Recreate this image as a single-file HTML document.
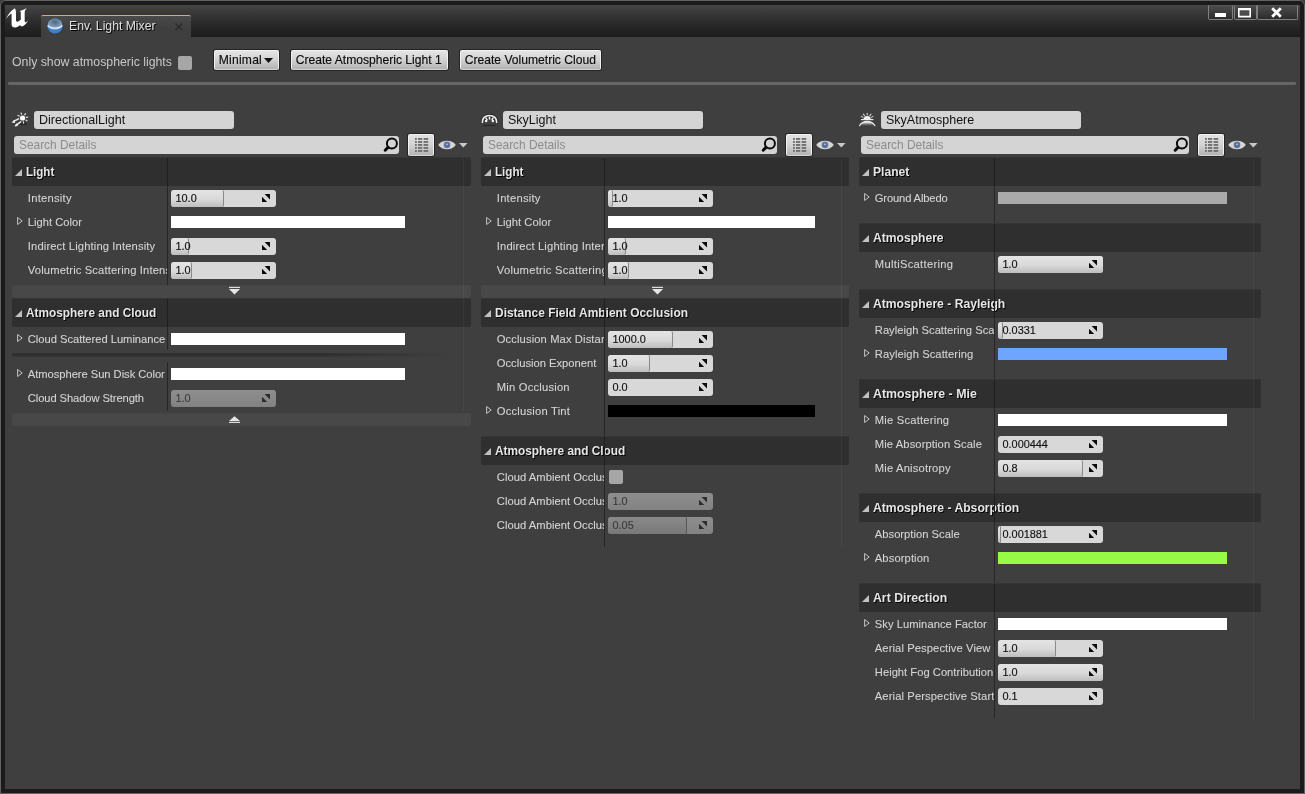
<!DOCTYPE html>
<html lang="en"><head><meta charset="utf-8"><title>Env. Light Mixer</title>
<style>
html,body{margin:0;padding:0;}
body{width:1305px;height:794px;overflow:hidden;background:#3f3f3f;position:relative;font-family:"Liberation Sans",sans-serif;font-size:12px;color:#c8c8c8;}
div,span{position:absolute;box-sizing:border-box;white-space:nowrap;}
svg{position:absolute;overflow:visible;}
.t{line-height:16px;height:16px;}
.lbl{color:#d4d4d4;-webkit-text-stroke:0.1px #d4d4d4;font-size:11.2px;overflow:hidden;}
.hdr{background:linear-gradient(#383838 0,#2f2f2f 1.5px);height:29px;border-radius:2px;}
.hdr b{position:absolute;left:14px;top:6.5px;line-height:16px;font-size:12.4px;transform-origin:0 0;color:#e6e6e6;text-shadow:1px 1px 0 #000;font-weight:bold;}
.spin{height:17px;width:105px;border-radius:3px;background:#d8d8d8;overflow:hidden;}
.spin i{position:absolute;left:0;top:0;bottom:0;border-radius:3px 2px 2px 3px;background:linear-gradient(#e4e4e4,#d9d9d9 55%,#bdbdbd);border-right:1px solid #8a8a8a;}
.spin span{left:4.5px;top:0;line-height:17px;font-size:10.9px;color:#111;-webkit-text-stroke:0.15px #111;}
.spin.dis{background:linear-gradient(#8e8e8e,#828282);}
.spin.dis span{color:#3c3c3c;-webkit-text-stroke:0.15px #3c3c3c;}
.spin.dis i{background:linear-gradient(#8a8a8a,#808080 55%,#787878);border-right:1px solid #565656;}
.cb{height:12px;}
.btn{height:20px;top:50px;border-radius:2px;background:linear-gradient(#e4e4e4,#d2d2d2 50%,#b2b2b2);border:1px solid #f2f2f2;border-bottom-color:#d4d4d4;box-shadow:0 0 0 1px rgba(28,28,28,.75);color:#0c0c0c;font-size:12.1px;line-height:18px;text-align:left;padding-left:3.8px;-webkit-text-stroke:0.15px #0c0c0c;}
.inp{background:#d4d4d4;border-radius:3px;color:#111;}
.split{width:1px;background:#262626;}
.exp{height:13px;background:linear-gradient(#434343 0,#484848 1.5px);border-radius:0 0 3px 3px;}
</style></head>
<body>
<div id="w" style="left:0;top:0;width:1305px;height:794px;will-change:transform;">
<div style="left:0;top:0;width:1305px;height:794px;border:1px solid #626262;border-radius:6px 6px 0 0;"></div>
<div style="left:1px;top:1px;width:1303px;height:792px;border:4px solid #1b1b1b;border-radius:5px 5px 0 0;"></div>
<div style="left:5px;top:5px;width:1295px;height:32px;background:linear-gradient(#464646,#3a3a3a 22%,#2a2a2a 58%,#1c1c1c);"></div>
<svg style="left:6px;top:8px" width="23" height="20" viewBox="0 0 23 20"><path fill="#fff" d="M0 10.9 C2 6.4 5 2.2 8.8 0.2 C9.6 1.4 10 2.4 10 3.6 L10 12 C10 13.5 11 14 12.2 13.4 L14.8 11.8 L14.8 4.6 C14.8 3.6 14.4 3.2 13.6 3 C16 2.4 18.6 1.6 20.8 0 C19.4 1.6 18.7 2.8 18.7 4.2 L18.7 13.2 C18.7 14.4 19.4 14.6 20.4 14 L22.2 12.6 C20.8 15.6 18.2 17.8 16 18.6 C14.8 18.2 14.4 17.8 14.2 17 C12.6 18.5 10.8 19.3 9.2 19.4 C7 19.5 5.6 18.4 5.6 16.4 L5.6 6.8 C5.6 5.8 5.2 5.6 4.4 6.2 C3 7.4 1.4 9 0 10.9 Z"/></svg>
<div style="left:41px;top:15px;width:150px;height:22px;background:linear-gradient(#4a4a4a,#3f3f3f 60%);border-top:1px solid #d8b832;border-radius:2px 2px 0 0;"></div>
<svg style="left:47px;top:18px" width="16" height="16" viewBox="0 0 16 16"><defs><radialGradient id="sg" cx="50%" cy="30%" r="60%"><stop offset="0" stop-color="#4a6782"/><stop offset="1" stop-color="#93abc2"/></radialGradient></defs><circle cx="8" cy="8" r="7.6" fill="#3a7fd0"/><ellipse cx="8" cy="6.2" rx="7" ry="5.6" fill="url(#sg)"/><path d="M0.8 7.4 C2.5 11 13.5 11 15.2 7.4" fill="none" stroke="#e6eef6" stroke-width="1.3"/></svg>
<span class="t" style="left:69px;top:18px;font-size:12.2px;color:#e0e0e0;text-shadow:1px 1px 0 #000;">Env. Light Mixer</span>
<svg style="left:175px;top:22.5px" width="8" height="8" viewBox="0 0 8 8"><path d="M0.5 0.5 L7 7 M7 0.5 L0.5 7" stroke="#2b2b2b" stroke-width="1.3"/></svg>
<div style="left:1208px;top:5px;width:25px;height:15px;border:1px solid #808080;border-top-color:#555;background:linear-gradient(#4c4c4c,#2b2b2b);border-radius:0 0 2px 2px;"><div style="left:5.8px;top:6.6px;width:11px;height:4px;background:#fff;"></div></div>
<div style="left:1234px;top:5px;width:23px;height:15px;border:1px solid #808080;border-top-color:#555;background:linear-gradient(#4c4c4c,#2b2b2b);border-radius:0 0 2px 2px;"><svg style="left:3.4px;top:2.4px" width="13" height="10" viewBox="0 0 13 10"><rect x="0" y="0" width="13" height="9.4" fill="#4c4c4c"/><path fill-rule="evenodd" d="M0 0 H13 V9.4 H0 Z M1.6 2.3 H11.4 V7.8 H1.6 Z" fill="#fff"/></svg></div>
<div style="left:1257px;top:5px;width:41px;height:15px;border:1px solid #808080;border-top-color:#555;background:linear-gradient(#4c4c4c,#2b2b2b);border-radius:0 0 2px 2px;"><svg style="left:12.8px;top:0.9px" width="11" height="11" viewBox="0 0 11 11"><path d="M1.2 1.2 L9.8 9.8 M9.8 1.2 L1.2 9.8" stroke="#fff" stroke-width="2.8"/></svg></div>
<span class="t" style="left:12px;top:54px;font-size:12.3px;color:#c8c8c8;">Only show atmospheric lights</span>
<div style="left:178px;top:56px;width:14px;height:14px;background:#a6a6a6;border-radius:2px;"></div>
<div class="btn" style="left:214px;width:65px;letter-spacing:0.22px;">Minimal<svg style="left:49px;top:7px" width="9" height="5"><path d="M0 0 L9 0 L4.5 5 Z" fill="#111"/></svg></div>
<div class="btn" style="left:291px;width:157px;">Create Atmospheric Light 1</div>
<div class="btn" style="left:460px;width:141px;">Create Volumetric Cloud</div>
<div style="left:8px;top:82px;width:1288px;height:3px;background:#666;border-radius:1px;"></div>
<svg style="left:11px;top:112px" width="18" height="16" viewBox="0 0 18 16"><ellipse cx="12.4" cy="11.8" rx="3.6" ry="1.5" fill="#1c1c1c" opacity=".55"/><path d="M10.5 2.2 L10.1 1.0 M13.7 2.8 L14.5 1.7 M15.4 5.3 L16.7 5.1 M14.9 8.1 L16.0 8.8 M12.4 9.8 L12.6 11.1 M8.2 4.1 L7.0 3.4" stroke="#e0e0e0" stroke-width="1.2" stroke-linecap="round"/><circle cx="11.55" cy="6" r="2.6" fill="#fff"/><g stroke="#ececec" stroke-width="1.5" stroke-linecap="round" fill="none"><path d="M7.6 6.8 L3 9.2"/><path d="M9.6 9.9 L5.6 12.8"/></g><path d="M0.6 10.4 L3.3 7.8 L4.2 10.9 Z M3.4 14.4 L5.4 11.3 L6.9 13.9 Z" fill="#f4f4f4"/></svg>
<div class="inp" style="left:34px;top:111px;width:200px;height:18px;"><span class="t" style="left:5px;top:1px;font-size:12.5px;">DirectionalLight</span></div>
<div class="inp" style="left:14px;top:136px;width:385px;height:18px;"><span class="t" style="left:5px;top:1px;font-size:11.9px;color:#8c8c8c;">Search Details</span><svg style="left:369px;top:1px" width="15" height="16" viewBox="0 0 15 16"><circle cx="8.9" cy="6.5" r="5" fill="none" stroke="#0a0a0a" stroke-width="2"/><path d="M5 10.4 L2.2 13.2" stroke="#0a0a0a" stroke-width="3" stroke-linecap="round"/></svg></div>
<div style="left:408px;top:134px;width:26px;height:22px;border-radius:2px;background:linear-gradient(#e2e2e2,#d2d2d2 50%,#b4b4b4);border:1px solid #f2f2f2;border-bottom-color:#d4d4d4;box-shadow:0 0 0 1px rgba(28,28,28,.75);"><svg style="left:6px;top:3px" width="14" height="14" viewBox="0 0 14 14"><g fill="#707070"><rect x="0" y="0" width="1.8" height="1.9"/><rect x="3" y="0" width="4.2" height="1.9"/><rect x="8.6" y="0" width="4.6" height="1.9"/><rect x="0" y="3" width="1.8" height="1.9"/><rect x="3" y="3" width="4.2" height="1.9"/><rect x="8.6" y="3" width="4.6" height="1.9"/><rect x="0" y="6" width="1.8" height="1.9"/><rect x="3" y="6" width="4.2" height="1.9"/><rect x="8.6" y="6" width="4.6" height="1.9"/><rect x="0" y="9" width="1.8" height="1.9"/><rect x="3" y="9" width="4.2" height="1.9"/><rect x="8.6" y="9" width="4.6" height="1.9"/><rect x="0" y="12" width="1.8" height="1.9"/><rect x="3" y="12" width="4.2" height="1.9"/><rect x="8.6" y="12" width="4.6" height="1.9"/></g></svg></div>
<svg style="left:438px;top:140px" width="18" height="10" viewBox="0 0 18 10"><path d="M0.2 5 C4 -0.6 14 -0.6 17.8 5 C14 10.6 4 10.6 0.2 5 Z" fill="#d6d6d6"/><circle cx="9" cy="4.9" r="3.3" fill="#6277a8"/><circle cx="9" cy="4.9" r="2" fill="#546a9c"/><circle cx="9" cy="4.3" r="0.9" fill="#c0c9dc"/></svg>
<svg style="left:459px;top:143px" width="9" height="5"><path d="M0 0 L8.6 0 L4.3 4.6 Z" fill="#c8c8c8"/></svg>
<div class="split" style="left:167px;top:158px;height:253px;"></div>
<div class="hdr" style="left:12px;top:157px;width:459px;"><b style="transform:scaleX(0.9346);">Light</b></div>
<svg style="left:15px;top:169px" width="7" height="7"><path d="M7 0 L7 7 L0 7 Z" fill="#c0c0c0"/></svg>
<div class="split" style="left:167px;top:158px;height:28px;background:#1f1f1f;"></div>
<span class="t lbl" style="left:27.8px;top:190px;width:139.0px;letter-spacing:0.259px;">Intensity</span>
<div class="spin" style="left:171px;top:190px;"><i style="width:52px"></i><span>10.0</span><svg style="left:91px;top:4px" width="8" height="8" viewBox="0 0 8 8"><path d="M2.6 0 L8 0 L8 5.4 Z M0 2.8 L5.2 8 L0 8 Z" fill="#0a0a0a"/></svg></div>
<svg style="left:16.6px;top:217px" width="6" height="8" viewBox="0 0 6 8"><path d="M0.6 0.5 L5.2 4 L0.6 7.5 Z" fill="none" stroke="#c4c4c4" stroke-width="1"/></svg>
<span class="t lbl" style="left:27.8px;top:214px;width:139.0px;letter-spacing:0.017px;">Light Color</span>
<div class="cb" style="left:171px;top:216px;width:234px;background:#ffffff;"></div>
<span class="t lbl" style="left:27.8px;top:238px;width:139.0px;letter-spacing:0.138px;">Indirect Lighting Intensity</span>
<div class="spin" style="left:171px;top:238px;"><i style="width:17px"></i><span>1.0</span><svg style="left:91px;top:4px" width="8" height="8" viewBox="0 0 8 8"><path d="M2.6 0 L8 0 L8 5.4 Z M0 2.8 L5.2 8 L0 8 Z" fill="#0a0a0a"/></svg></div>
<span class="t lbl" style="left:27.8px;top:262px;width:139.0px;letter-spacing:0.148px;">Volumetric Scattering Intens</span>
<div class="spin" style="left:171px;top:262px;"><i style="width:20px"></i><span>1.0</span><svg style="left:91px;top:4px" width="8" height="8" viewBox="0 0 8 8"><path d="M2.6 0 L8 0 L8 5.4 Z M0 2.8 L5.2 8 L0 8 Z" fill="#0a0a0a"/></svg></div>
<div class="exp" style="left:12px;top:285px;width:459px;"></div>
<svg style="left:229px;top:286px" width="11" height="9" viewBox="0 0 11 9"><rect x="0" y="0.8" width="11" height="1.2" fill="#dcdcdc"/><path d="M0 2.9 L11 2.9 L5.5 8.4 Z" fill="#e6e6e6"/></svg>
<div class="hdr" style="left:12px;top:298px;width:459px;"><b style="transform:scaleX(0.9552);">Atmosphere and Cloud</b></div>
<svg style="left:15px;top:310px" width="7" height="7"><path d="M7 0 L7 7 L0 7 Z" fill="#c0c0c0"/></svg>
<div class="split" style="left:167px;top:299px;height:28px;background:#1f1f1f;"></div>
<svg style="left:16.6px;top:334px" width="6" height="8" viewBox="0 0 6 8"><path d="M0.6 0.5 L5.2 4 L0.6 7.5 Z" fill="none" stroke="#c4c4c4" stroke-width="1"/></svg>
<span class="t lbl" style="left:27.8px;top:331px;width:139.0px;letter-spacing:-0.027px;">Cloud Scattered Luminance</span>
<div class="cb" style="left:171px;top:333px;width:234px;background:#ffffff;"></div>
<div style="left:167px;top:350px;width:1px;height:12px;background:#3f3f3f;"></div>
<div style="left:12px;top:353px;width:444px;height:5px;background:linear-gradient(to right,rgba(63,63,63,0) 0,rgba(63,63,63,0) 70%,#3f3f3f 100%),linear-gradient(#3a3a3a 0,#2b2b2b 1px,#2f2f2f 2px,#3f3f3f 5px);"></div>
<svg style="left:16.6px;top:369px" width="6" height="8" viewBox="0 0 6 8"><path d="M0.6 0.5 L5.2 4 L0.6 7.5 Z" fill="none" stroke="#c4c4c4" stroke-width="1"/></svg>
<span class="t lbl" style="left:27.8px;top:366px;width:139.0px;letter-spacing:-0.042px;">Atmosphere Sun Disk Color</span>
<div class="cb" style="left:171px;top:368px;width:234px;background:#ffffff;"></div>
<span class="t lbl" style="left:27.8px;top:390px;width:139.0px;letter-spacing:-0.099px;">Cloud Shadow Strength</span>
<div class="spin dis" style="left:171px;top:390px;"><span>1.0</span><svg style="left:91px;top:4px" width="8" height="8" viewBox="0 0 8 8"><path d="M2.6 0 L8 0 L8 5.4 Z M0 2.8 L5.2 8 L0 8 Z" fill="#2c2c2c"/></svg></div>
<div class="exp" style="left:12px;top:413px;width:459px;"></div>
<svg style="left:229px;top:416px" width="11" height="9" viewBox="0 0 11 9"><path d="M0 5 L11 5 L5.5 0.2 Z" fill="#e6e6e6"/><rect x="0" y="5.8" width="11" height="1.2" fill="#dcdcdc"/></svg>
<div style="left:463px;top:158px;width:1px;height:253px;background:rgba(255,255,255,.045);"></div>
<svg style="left:481px;top:113px" width="17" height="14" viewBox="0 0 17 14"><path d="M2.4 12.4 H14.6" stroke="#1c1c1c" stroke-width="1" opacity=".8"/><path d="M1.4 9.4 C1.2 4.8 4.6 2.5 8.5 2.5 C12.4 2.5 15.8 4.8 15.6 9.4" fill="none" stroke="#1a1a1a" stroke-width="2.8" stroke-linecap="round"/><path d="M1.4 9.4 C1.2 4.8 4.6 2.5 8.5 2.5 C12.4 2.5 15.8 4.8 15.6 9.4" fill="none" stroke="#f2f2f2" stroke-width="1.7" stroke-linecap="round"/><g stroke="#f2f2f2" stroke-width="1.5" stroke-linecap="round"><path d="M8.5 4.2 V6 M5 5 L5.9 6.6 M12 5 L11.1 6.6"/></g><circle cx="5.2" cy="8" r="1.2" fill="#fff"/><circle cx="11.8" cy="8" r="1.2" fill="#fff"/></svg>
<div class="inp" style="left:503px;top:111px;width:200px;height:18px;"><span class="t" style="left:5px;top:1px;font-size:12.5px;">SkyLight</span></div>
<div class="inp" style="left:483px;top:136px;width:294px;height:18px;"><span class="t" style="left:5px;top:1px;font-size:11.9px;color:#8c8c8c;">Search Details</span><svg style="left:278px;top:1px" width="15" height="16" viewBox="0 0 15 16"><circle cx="8.9" cy="6.5" r="5" fill="none" stroke="#0a0a0a" stroke-width="2"/><path d="M5 10.4 L2.2 13.2" stroke="#0a0a0a" stroke-width="3" stroke-linecap="round"/></svg></div>
<div style="left:786px;top:134px;width:26px;height:22px;border-radius:2px;background:linear-gradient(#e2e2e2,#d2d2d2 50%,#b4b4b4);border:1px solid #f2f2f2;border-bottom-color:#d4d4d4;box-shadow:0 0 0 1px rgba(28,28,28,.75);"><svg style="left:6px;top:3px" width="14" height="14" viewBox="0 0 14 14"><g fill="#707070"><rect x="0" y="0" width="1.8" height="1.9"/><rect x="3" y="0" width="4.2" height="1.9"/><rect x="8.6" y="0" width="4.6" height="1.9"/><rect x="0" y="3" width="1.8" height="1.9"/><rect x="3" y="3" width="4.2" height="1.9"/><rect x="8.6" y="3" width="4.6" height="1.9"/><rect x="0" y="6" width="1.8" height="1.9"/><rect x="3" y="6" width="4.2" height="1.9"/><rect x="8.6" y="6" width="4.6" height="1.9"/><rect x="0" y="9" width="1.8" height="1.9"/><rect x="3" y="9" width="4.2" height="1.9"/><rect x="8.6" y="9" width="4.6" height="1.9"/><rect x="0" y="12" width="1.8" height="1.9"/><rect x="3" y="12" width="4.2" height="1.9"/><rect x="8.6" y="12" width="4.6" height="1.9"/></g></svg></div>
<svg style="left:816px;top:140px" width="18" height="10" viewBox="0 0 18 10"><path d="M0.2 5 C4 -0.6 14 -0.6 17.8 5 C14 10.6 4 10.6 0.2 5 Z" fill="#d6d6d6"/><circle cx="9" cy="4.9" r="3.3" fill="#6277a8"/><circle cx="9" cy="4.9" r="2" fill="#546a9c"/><circle cx="9" cy="4.3" r="0.9" fill="#c0c9dc"/></svg>
<svg style="left:837px;top:143px" width="9" height="5"><path d="M0 0 L8.6 0 L4.3 4.6 Z" fill="#c8c8c8"/></svg>
<div class="split" style="left:604px;top:158px;height:389px;"></div>
<div class="hdr" style="left:481px;top:157px;width:368px;"><b style="transform:scaleX(0.9412);">Light</b></div>
<svg style="left:484px;top:169px" width="7" height="7"><path d="M7 0 L7 7 L0 7 Z" fill="#c0c0c0"/></svg>
<div class="split" style="left:604px;top:158px;height:28px;background:#1f1f1f;"></div>
<span class="t lbl" style="left:496.8px;top:190px;width:107.0px;letter-spacing:0.248px;">Intensity</span>
<div class="spin" style="left:608px;top:190px;"><i style="width:4px"></i><span>1.0</span><svg style="left:91px;top:4px" width="8" height="8" viewBox="0 0 8 8"><path d="M2.6 0 L8 0 L8 5.4 Z M0 2.8 L5.2 8 L0 8 Z" fill="#0a0a0a"/></svg></div>
<svg style="left:485.6px;top:217px" width="6" height="8" viewBox="0 0 6 8"><path d="M0.6 0.5 L5.2 4 L0.6 7.5 Z" fill="none" stroke="#c4c4c4" stroke-width="1"/></svg>
<span class="t lbl" style="left:496.8px;top:214px;width:107.0px;letter-spacing:0.026px;">Light Color</span>
<div class="cb" style="left:608px;top:216px;width:207px;background:#ffffff;"></div>
<span class="t lbl" style="left:496.8px;top:238px;width:107.0px;letter-spacing:0.156px;">Indirect Lighting Inten</span>
<div class="spin" style="left:608px;top:238px;"><i style="width:17px"></i><span>1.0</span><svg style="left:91px;top:4px" width="8" height="8" viewBox="0 0 8 8"><path d="M2.6 0 L8 0 L8 5.4 Z M0 2.8 L5.2 8 L0 8 Z" fill="#0a0a0a"/></svg></div>
<span class="t lbl" style="left:496.8px;top:262px;width:107.0px;letter-spacing:0.26px;">Volumetric Scattering</span>
<div class="spin" style="left:608px;top:262px;"><i style="width:20px"></i><span>1.0</span><svg style="left:91px;top:4px" width="8" height="8" viewBox="0 0 8 8"><path d="M2.6 0 L8 0 L8 5.4 Z M0 2.8 L5.2 8 L0 8 Z" fill="#0a0a0a"/></svg></div>
<div class="exp" style="left:481px;top:285px;width:368px;"></div>
<svg style="left:652px;top:286px" width="11" height="9" viewBox="0 0 11 9"><rect x="0" y="0.8" width="11" height="1.2" fill="#dcdcdc"/><path d="M0 2.9 L11 2.9 L5.5 8.4 Z" fill="#e6e6e6"/></svg>
<div class="hdr" style="left:481px;top:298px;width:368px;"><b style="transform:scaleX(0.9655);">Distance Field Ambient Occlusion</b></div>
<svg style="left:484px;top:310px" width="7" height="7"><path d="M7 0 L7 7 L0 7 Z" fill="#c0c0c0"/></svg>
<div class="split" style="left:604px;top:299px;height:28px;background:#1f1f1f;"></div>
<span class="t lbl" style="left:496.8px;top:331px;width:107.0px;letter-spacing:0.112px;">Occlusion Max Distan</span>
<div class="spin" style="left:608px;top:331px;"><i style="width:64px"></i><span>1000.0</span><svg style="left:91px;top:4px" width="8" height="8" viewBox="0 0 8 8"><path d="M2.6 0 L8 0 L8 5.4 Z M0 2.8 L5.2 8 L0 8 Z" fill="#0a0a0a"/></svg></div>
<span class="t lbl" style="left:496.8px;top:355px;width:107.0px;letter-spacing:-0.001px;">Occlusion Exponent</span>
<div class="spin" style="left:608px;top:355px;"><i style="width:41px"></i><span>1.0</span><svg style="left:91px;top:4px" width="8" height="8" viewBox="0 0 8 8"><path d="M2.6 0 L8 0 L8 5.4 Z M0 2.8 L5.2 8 L0 8 Z" fill="#0a0a0a"/></svg></div>
<span class="t lbl" style="left:496.8px;top:379px;width:107.0px;letter-spacing:0.21px;">Min Occlusion</span>
<div class="spin" style="left:608px;top:379px;"><span>0.0</span><svg style="left:91px;top:4px" width="8" height="8" viewBox="0 0 8 8"><path d="M2.6 0 L8 0 L8 5.4 Z M0 2.8 L5.2 8 L0 8 Z" fill="#0a0a0a"/></svg></div>
<svg style="left:485.6px;top:406px" width="6" height="8" viewBox="0 0 6 8"><path d="M0.6 0.5 L5.2 4 L0.6 7.5 Z" fill="none" stroke="#c4c4c4" stroke-width="1"/></svg>
<span class="t lbl" style="left:496.8px;top:403px;width:107.0px;letter-spacing:0.217px;">Occlusion Tint</span>
<div class="cb" style="left:608px;top:405px;width:207px;background:#000;"></div>
<div class="hdr" style="left:481px;top:436px;width:368px;"><b style="transform:scaleX(0.9559);">Atmosphere and Cloud</b></div>
<svg style="left:484px;top:448px" width="7" height="7"><path d="M7 0 L7 7 L0 7 Z" fill="#c0c0c0"/></svg>
<div class="split" style="left:604px;top:437px;height:28px;background:#1f1f1f;"></div>
<span class="t lbl" style="left:496.8px;top:469px;width:107.0px;letter-spacing:0.044px;">Cloud Ambient Occlus</span>
<div style="left:609px;top:470px;width:14px;height:14px;background:#a6a6a6;border-radius:2px;"></div>
<span class="t lbl" style="left:496.8px;top:493px;width:107.0px;letter-spacing:0.044px;">Cloud Ambient Occlus</span>
<div class="spin dis" style="left:608px;top:493px;"><span>1.0</span><svg style="left:91px;top:4px" width="8" height="8" viewBox="0 0 8 8"><path d="M2.6 0 L8 0 L8 5.4 Z M0 2.8 L5.2 8 L0 8 Z" fill="#2c2c2c"/></svg></div>
<span class="t lbl" style="left:496.8px;top:517px;width:107.0px;letter-spacing:0.044px;">Cloud Ambient Occlus</span>
<div class="spin dis" style="left:608px;top:517px;"><i style="width:78px"></i><span>0.05</span><svg style="left:91px;top:4px" width="8" height="8" viewBox="0 0 8 8"><path d="M2.6 0 L8 0 L8 5.4 Z M0 2.8 L5.2 8 L0 8 Z" fill="#2c2c2c"/></svg></div>
<div style="left:841px;top:158px;width:1px;height:389px;background:rgba(255,255,255,.045);"></div>
<svg style="left:859px;top:112px" width="17" height="15" viewBox="0 0 17 15"><defs><linearGradient id="pg" x1="0" y1="0" x2="0" y2="1"><stop offset="0" stop-color="#fff"/><stop offset=".35" stop-color="#ddd" stop-opacity=".8"/><stop offset="1" stop-color="#666" stop-opacity="0"/></linearGradient></defs><path d="M4.6 7.6 A3.6 3.6 0 0 1 11.8 7.6 Z" fill="#f2f2f2"/><path d="M2 7.6 H14.4" stroke="#f2f2f2" stroke-width="1.1"/><g stroke="#cfcfcf" stroke-width="1.1" stroke-linecap="round"><path d="M8.2 1.2 V3 M4.4 2.2 L5.6 3.8 M12 2.2 L10.8 3.8 M2.4 4.4 L4 5.4 M14 4.4 L12.4 5.4"/></g><path d="M0.5 13.7 A9 9 0 0 1 15.9 13.7 L15.9 14.2 L0.5 14.2 Z" fill="url(#pg)"/><path d="M0.5 13.7 A9 9 0 0 1 15.9 13.7" fill="none" stroke="#f0f0f0" stroke-width="1.1" stroke-linecap="round"/></svg>
<div class="inp" style="left:881px;top:111px;width:200px;height:18px;"><span class="t" style="left:5px;top:1px;font-size:12.5px;">SkyAtmosphere</span></div>
<div class="inp" style="left:861px;top:136px;width:328px;height:18px;"><span class="t" style="left:5px;top:1px;font-size:11.9px;color:#8c8c8c;">Search Details</span><svg style="left:312px;top:1px" width="15" height="16" viewBox="0 0 15 16"><circle cx="8.9" cy="6.5" r="5" fill="none" stroke="#0a0a0a" stroke-width="2"/><path d="M5 10.4 L2.2 13.2" stroke="#0a0a0a" stroke-width="3" stroke-linecap="round"/></svg></div>
<div style="left:1198px;top:134px;width:26px;height:22px;border-radius:2px;background:linear-gradient(#e2e2e2,#d2d2d2 50%,#b4b4b4);border:1px solid #f2f2f2;border-bottom-color:#d4d4d4;box-shadow:0 0 0 1px rgba(28,28,28,.75);"><svg style="left:6px;top:3px" width="14" height="14" viewBox="0 0 14 14"><g fill="#707070"><rect x="0" y="0" width="1.8" height="1.9"/><rect x="3" y="0" width="4.2" height="1.9"/><rect x="8.6" y="0" width="4.6" height="1.9"/><rect x="0" y="3" width="1.8" height="1.9"/><rect x="3" y="3" width="4.2" height="1.9"/><rect x="8.6" y="3" width="4.6" height="1.9"/><rect x="0" y="6" width="1.8" height="1.9"/><rect x="3" y="6" width="4.2" height="1.9"/><rect x="8.6" y="6" width="4.6" height="1.9"/><rect x="0" y="9" width="1.8" height="1.9"/><rect x="3" y="9" width="4.2" height="1.9"/><rect x="8.6" y="9" width="4.6" height="1.9"/><rect x="0" y="12" width="1.8" height="1.9"/><rect x="3" y="12" width="4.2" height="1.9"/><rect x="8.6" y="12" width="4.6" height="1.9"/></g></svg></div>
<svg style="left:1228px;top:140px" width="18" height="10" viewBox="0 0 18 10"><path d="M0.2 5 C4 -0.6 14 -0.6 17.8 5 C14 10.6 4 10.6 0.2 5 Z" fill="#d6d6d6"/><circle cx="9" cy="4.9" r="3.3" fill="#6277a8"/><circle cx="9" cy="4.9" r="2" fill="#546a9c"/><circle cx="9" cy="4.3" r="0.9" fill="#c0c9dc"/></svg>
<svg style="left:1249px;top:143px" width="9" height="5"><path d="M0 0 L8.6 0 L4.3 4.6 Z" fill="#c8c8c8"/></svg>
<div class="split" style="left:994px;top:158px;height:560px;"></div>
<div class="hdr" style="left:859px;top:157px;width:402px;"><b style="transform:scaleX(0.9761);">Planet</b></div>
<svg style="left:862px;top:169px" width="7" height="7"><path d="M7 0 L7 7 L0 7 Z" fill="#c0c0c0"/></svg>
<div class="split" style="left:994px;top:158px;height:28px;background:#1f1f1f;"></div>
<svg style="left:863.6px;top:193px" width="6" height="8" viewBox="0 0 6 8"><path d="M0.6 0.5 L5.2 4 L0.6 7.5 Z" fill="none" stroke="#c4c4c4" stroke-width="1"/></svg>
<span class="t lbl" style="left:874.8px;top:190px;width:119.0px;letter-spacing:-0.143px;">Ground Albedo</span>
<div class="cb" style="left:998px;top:192px;width:229px;background:#aaaaaa;"></div>
<div class="hdr" style="left:859px;top:223px;width:402px;"><b style="transform:scaleX(0.9765);">Atmosphere</b></div>
<svg style="left:862px;top:235px" width="7" height="7"><path d="M7 0 L7 7 L0 7 Z" fill="#c0c0c0"/></svg>
<div class="split" style="left:994px;top:224px;height:28px;background:#1f1f1f;"></div>
<span class="t lbl" style="left:874.8px;top:256px;width:119.0px;letter-spacing:0.3px;">MultiScattering</span>
<div class="spin" style="left:998px;top:256px;"><i style="width:105px"></i><span>1.0</span><svg style="left:91px;top:4px" width="8" height="8" viewBox="0 0 8 8"><path d="M2.6 0 L8 0 L8 5.4 Z M0 2.8 L5.2 8 L0 8 Z" fill="#0a0a0a"/></svg></div>
<div class="hdr" style="left:859px;top:289px;width:402px;"><b style="transform:scaleX(0.9803);">Atmosphere - Rayleigh</b></div>
<svg style="left:862px;top:301px" width="7" height="7"><path d="M7 0 L7 7 L0 7 Z" fill="#c0c0c0"/></svg>
<div class="split" style="left:994px;top:290px;height:28px;background:#1f1f1f;"></div>
<span class="t lbl" style="left:874.8px;top:322px;width:119.0px;letter-spacing:0.013px;">Rayleigh Scattering Sca</span>
<div class="spin" style="left:998px;top:322px;"><i style="width:4px"></i><span>0.0331</span><svg style="left:91px;top:4px" width="8" height="8" viewBox="0 0 8 8"><path d="M2.6 0 L8 0 L8 5.4 Z M0 2.8 L5.2 8 L0 8 Z" fill="#0a0a0a"/></svg></div>
<svg style="left:863.6px;top:349px" width="6" height="8" viewBox="0 0 6 8"><path d="M0.6 0.5 L5.2 4 L0.6 7.5 Z" fill="none" stroke="#c4c4c4" stroke-width="1"/></svg>
<span class="t lbl" style="left:874.8px;top:346px;width:119.0px;letter-spacing:0.078px;">Rayleigh Scattering</span>
<div class="cb" style="left:998px;top:348px;width:229px;background:#6ea6ff;"></div>
<div class="hdr" style="left:859px;top:379px;width:402px;"><b style="transform:scaleX(0.9984);">Atmosphere - Mie</b></div>
<svg style="left:862px;top:391px" width="7" height="7"><path d="M7 0 L7 7 L0 7 Z" fill="#c0c0c0"/></svg>
<div class="split" style="left:994px;top:380px;height:28px;background:#1f1f1f;"></div>
<svg style="left:863.6px;top:415px" width="6" height="8" viewBox="0 0 6 8"><path d="M0.6 0.5 L5.2 4 L0.6 7.5 Z" fill="none" stroke="#c4c4c4" stroke-width="1"/></svg>
<span class="t lbl" style="left:874.8px;top:412px;width:119.0px;letter-spacing:0.213px;">Mie Scattering</span>
<div class="cb" style="left:998px;top:414px;width:229px;background:#ffffff;"></div>
<span class="t lbl" style="left:874.8px;top:436px;width:119.0px;letter-spacing:0.105px;">Mie Absorption Scale</span>
<div class="spin" style="left:998px;top:436px;"><span>0.000444</span><svg style="left:91px;top:4px" width="8" height="8" viewBox="0 0 8 8"><path d="M2.6 0 L8 0 L8 5.4 Z M0 2.8 L5.2 8 L0 8 Z" fill="#0a0a0a"/></svg></div>
<span class="t lbl" style="left:874.8px;top:460px;width:119.0px;letter-spacing:0.18px;">Mie Anisotropy</span>
<div class="spin" style="left:998px;top:460px;"><i style="width:84px"></i><span>0.8</span><svg style="left:91px;top:4px" width="8" height="8" viewBox="0 0 8 8"><path d="M2.6 0 L8 0 L8 5.4 Z M0 2.8 L5.2 8 L0 8 Z" fill="#0a0a0a"/></svg></div>
<div class="hdr" style="left:859px;top:493px;width:402px;"><b style="transform:scaleX(0.9824);">Atmosphere - Absorption</b></div>
<svg style="left:862px;top:505px" width="7" height="7"><path d="M7 0 L7 7 L0 7 Z" fill="#c0c0c0"/></svg>
<div class="split" style="left:994px;top:494px;height:28px;background:#1f1f1f;"></div>
<span class="t lbl" style="left:874.8px;top:526px;width:119.0px;letter-spacing:0.019px;">Absorption Scale</span>
<div class="spin" style="left:998px;top:526px;"><i style="width:2px"></i><span>0.001881</span><svg style="left:91px;top:4px" width="8" height="8" viewBox="0 0 8 8"><path d="M2.6 0 L8 0 L8 5.4 Z M0 2.8 L5.2 8 L0 8 Z" fill="#0a0a0a"/></svg></div>
<svg style="left:863.6px;top:553px" width="6" height="8" viewBox="0 0 6 8"><path d="M0.6 0.5 L5.2 4 L0.6 7.5 Z" fill="none" stroke="#c4c4c4" stroke-width="1"/></svg>
<span class="t lbl" style="left:874.8px;top:550px;width:119.0px;letter-spacing:0.11px;">Absorption</span>
<div class="cb" style="left:998px;top:552px;width:229px;background:#96fa46;"></div>
<div class="hdr" style="left:859px;top:583px;width:402px;"><b style="transform:scaleX(0.99);">Art Direction</b></div>
<svg style="left:862px;top:595px" width="7" height="7"><path d="M7 0 L7 7 L0 7 Z" fill="#c0c0c0"/></svg>
<div class="split" style="left:994px;top:584px;height:28px;background:#1f1f1f;"></div>
<svg style="left:863.6px;top:619px" width="6" height="8" viewBox="0 0 6 8"><path d="M0.6 0.5 L5.2 4 L0.6 7.5 Z" fill="none" stroke="#c4c4c4" stroke-width="1"/></svg>
<span class="t lbl" style="left:874.8px;top:616px;width:119.0px;letter-spacing:0.039px;">Sky Luminance Factor</span>
<div class="cb" style="left:998px;top:618px;width:229px;background:#ffffff;"></div>
<span class="t lbl" style="left:874.8px;top:640px;width:119.0px;letter-spacing:0.096px;">Aerial Pespective View</span>
<div class="spin" style="left:998px;top:640px;"><i style="width:57px"></i><span>1.0</span><svg style="left:91px;top:4px" width="8" height="8" viewBox="0 0 8 8"><path d="M2.6 0 L8 0 L8 5.4 Z M0 2.8 L5.2 8 L0 8 Z" fill="#0a0a0a"/></svg></div>
<span class="t lbl" style="left:874.8px;top:664px;width:119.0px;letter-spacing:0.014px;">Height Fog Contribution</span>
<div class="spin" style="left:998px;top:664px;"><i style="width:105px"></i><span>1.0</span><svg style="left:91px;top:4px" width="8" height="8" viewBox="0 0 8 8"><path d="M2.6 0 L8 0 L8 5.4 Z M0 2.8 L5.2 8 L0 8 Z" fill="#0a0a0a"/></svg></div>
<span class="t lbl" style="left:874.8px;top:688px;width:119.0px;letter-spacing:0.116px;">Aerial Perspective Start</span>
<div class="spin" style="left:998px;top:688px;"><span>0.1</span><svg style="left:91px;top:4px" width="8" height="8" viewBox="0 0 8 8"><path d="M2.6 0 L8 0 L8 5.4 Z M0 2.8 L5.2 8 L0 8 Z" fill="#0a0a0a"/></svg></div>
<div style="left:1253px;top:158px;width:1px;height:560px;background:rgba(255,255,255,.045);"></div>
</div>
</body></html>
